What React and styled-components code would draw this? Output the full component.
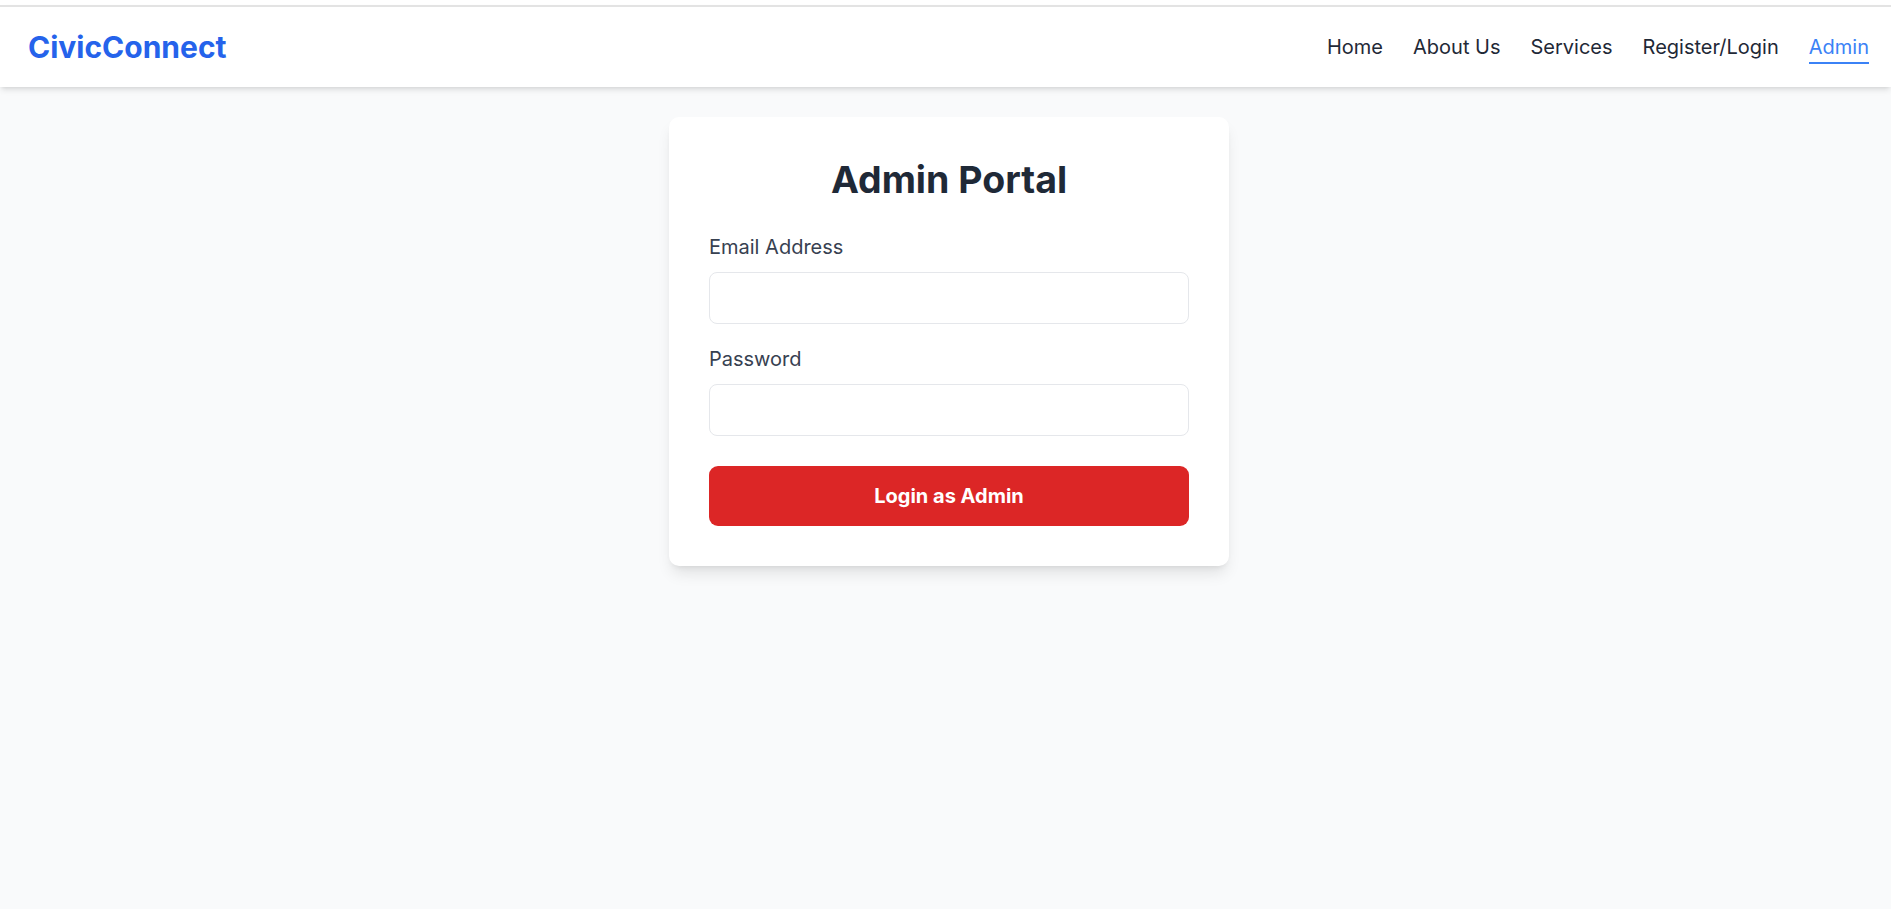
import React from "react";
import styled, { createGlobalStyle } from "styled-components";

const Global = createGlobalStyle`
  html, body { margin: 0; padding: 0; }
  body {
    background: #f9fafb;
    font-family: Inter, "Noto Sans", "Liberation Sans", sans-serif;
    min-height: 909px;
  }
  * { box-sizing: border-box; }
`;

const Page = styled.div`
  min-height: 909px;
  background: #f9fafb;
  border-top: 5px solid #ffffff;
`;

const Header = styled.header`
  height: 82px;
  background: #ffffff;
  border-top: 2px solid #e3e3e3;
  box-shadow: 0 4px 6px -1px rgba(0, 0, 0, 0.1), 0 2px 4px -2px rgba(0, 0, 0, 0.1);
  display: flex;
  align-items: center;
  justify-content: space-between;
  padding: 1px 22px 0 28px;
  position: relative;
  z-index: 1;
`;

const Logo = styled.div`
  font-size: 30px;
  line-height: 40px;
  font-weight: 700;
  color: #2563eb;
  margin-top: -1px;
`;

const Nav = styled.nav`
  display: flex;
  gap: 30px;
  padding-top: 1px;
`;

const NavLink = styled.a`
  font-size: 20px;
  line-height: 30px;
  color: ${(p) => (p.$active ? "#3b82f6" : "#1f2937")};
  text-decoration: none;
  border-bottom: 2px solid ${(p) => (p.$active ? "#3b82f6" : "transparent")};
  cursor: pointer;
`;

const Main = styled.main`
  display: flex;
  justify-content: center;
  padding: 30px 0 0 7px;
`;

const Card = styled.div`
  width: 560px;
  background: #ffffff;
  border-radius: 10px;
  padding: 40px;
  box-shadow: 0 10px 15px -3px rgba(0, 0, 0, 0.1), 0 4px 6px -4px rgba(0, 0, 0, 0.1);
`;

const Title = styled.h2`
  margin: 0 0 30px;
  text-align: center;
  font-size: 37.5px;
  line-height: 45px;
  font-weight: 700;
  color: #1f2937;
`;

const Field = styled.div`
  margin-bottom: ${(p) => p.$mb || 20}px;
`;

const Label = styled.label`
  display: block;
  font-size: 20px;
  line-height: 30px;
  color: #374151;
  margin-bottom: 10px;
`;

const Input = styled.input`
  display: block;
  width: 100%;
  height: 52px;
  border: 1px solid #e5e7eb;
  border-radius: 8px;
  padding: 0 15px;
  font-size: 20px;
  font-family: inherit;
  outline: none;
  background: #fff;
`;

const Button = styled.button`
  display: block;
  width: 100%;
  height: 60px;
  border: none;
  border-radius: 9px;
  background: #dc2626;
  color: #ffffff;
  font-family: inherit;
  font-size: 20px;
  font-weight: 700;
  cursor: pointer;
`;

export default function App() {
  return (
    <>
      <Global />
      <Page>
        <Header>
          <Logo>CivicConnect</Logo>
          <Nav>
            <NavLink>Home</NavLink>
            <NavLink>About Us</NavLink>
            <NavLink>Services</NavLink>
            <NavLink>Register/Login</NavLink>
            <NavLink $active>Admin</NavLink>
          </Nav>
        </Header>
        <Main>
          <Card>
            <Title>Admin Portal</Title>
            <Field>
              <Label>Email Address</Label>
              <Input type="email" />
            </Field>
            <Field $mb={30}>
              <Label>Password</Label>
              <Input type="password" />
            </Field>
            <Button>Login as Admin</Button>
          </Card>
        </Main>
      </Page>
    </>
  );
}
